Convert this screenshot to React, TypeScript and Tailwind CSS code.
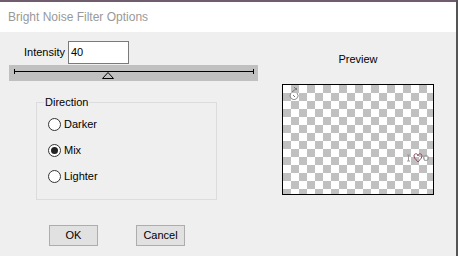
import React from "react"

const font = { fontFamily: '"Liberation Sans", Arial, sans-serif' }

function Radio({ label, checked }: { label: string; checked?: boolean }) {
  return (
    <label className="flex h-[13px] items-center gap-[3px] text-[11px] text-black">
      <span className="flex h-[13px] w-[13px] items-center justify-center rounded-full border border-[#333] bg-white">
        {checked && <span className="h-[7px] w-[7px] rounded-full bg-[#222]" />}
      </span>
      <span>{label}</span>
    </label>
  )
}

function Sketch() {
  return (
    <svg width="12" height="14" viewBox="0 0 12 14" className="absolute left-[5px] top-[1px]">
      <path d="M3 7 a4 4 0 1 0 6 0" fill="none" stroke="#8a8a8a" strokeWidth="1" />
      <path d="M4 6 L9 2 M6 1 L9 4 M5 9 L7 11" stroke="#777" strokeWidth="1" fill="none" />
    </svg>
  )
}

function LoveMark() {
  return (
    <svg width="24" height="12" viewBox="0 0 24 12" className="absolute right-[3px] top-[67px]">
      <path d="M1 3 H4 M2.5 3 V9 M1 9 H4" stroke="#999" strokeWidth="1" fill="none" />
      <path d="M8 4 C8 1 12 1 12 4 C12 1 16 1 16 4 C16 7 12 9 12 10 C12 9 8 7 8 4 Z" fill="none" stroke="#8a4a5a" strokeWidth="1" />
      <circle cx="20" cy="6" r="2.5" fill="none" stroke="#999" strokeWidth="1" />
      <path d="M17 3 L19 9" stroke="#aaa" strokeWidth="1" />
    </svg>
  )
}

export default function App() {
  return (
    <div className="flex h-[256px] w-[458px] overflow-hidden bg-[#efefef]" style={font}>
      <div className="flex flex-1 flex-col">
        <div className="h-[2px] bg-[#6f5c6e]" />
        <div className="flex h-[30px] items-center bg-white pl-[8px] text-[12px] text-[#999]">
          Bright Noise Filter Options
        </div>
        <div className="flex flex-1">
          <div className="flex w-[260px] flex-col pl-[9px]">
            <div className="mt-[9px] flex items-center pl-[15px]">
              <span className="w-[44px] text-[11px] text-black">Intensity</span>
              <div className="flex h-[23px] w-[61px] items-center border border-[#7a7a7a] bg-white pl-[2px] text-[11px] text-black">
                40
              </div>
            </div>
            <div className="relative mt-px h-[16px] w-[249px] bg-[#c0c0c0]">
              <div className="absolute left-[5px] top-[6px] h-px w-[239px] bg-black" />
              <div className="absolute left-[5px] top-[4px] h-[5px] w-px bg-black" />
              <div className="absolute left-[244px] top-[4px] h-[5px] w-px bg-black" />
              <svg width="12" height="7" viewBox="0 0 12 7" className="absolute left-[93px] top-[7px]">
                <path d="M6 0.5 L11.5 6.5 H0.5 Z" fill="none" stroke="#000" strokeWidth="1" />
              </svg>
            </div>
            <fieldset className="ml-[27px] mt-[13px] h-[106px] w-[181px] border border-[#dcdcdc]">
              <legend className="ml-[7px] px-[1px] text-[11px] text-black">Direction</legend>
              <div className="mt-[7px] flex flex-col gap-[13px] pl-[11px]">
                <Radio label="Darker" />
                <Radio label="Mix" checked />
                <Radio label="Lighter" />
              </div>
            </fieldset>
            <div className="mt-[25px] flex gap-[38px] pl-[40px]">
              <button className="h-[21px] w-[49px] border border-[#adadad] bg-[#e1e1e1] text-[11px] text-black">OK</button>
              <button className="h-[21px] w-[49px] border border-[#adadad] bg-[#e1e1e1] text-[11px] text-black">Cancel</button>
            </div>
          </div>
          <div className="flex flex-col pl-[22px]">
            <div className="mt-[19px] w-[152px] text-center text-[11px] text-black">Preview</div>
            <div className="relative mt-[16px] h-[111px] w-[152px] border border-black bg-white bg-[conic-gradient(#c0c0c0_25%,#fff_0_50%,#c0c0c0_0_75%,#fff_0)] bg-[length:16px_16px]">
              <Sketch />
              <LoveMark />
            </div>
          </div>
        </div>
      </div>
      <div className="w-[2px] bg-[#555]" />
    </div>
  )
}
